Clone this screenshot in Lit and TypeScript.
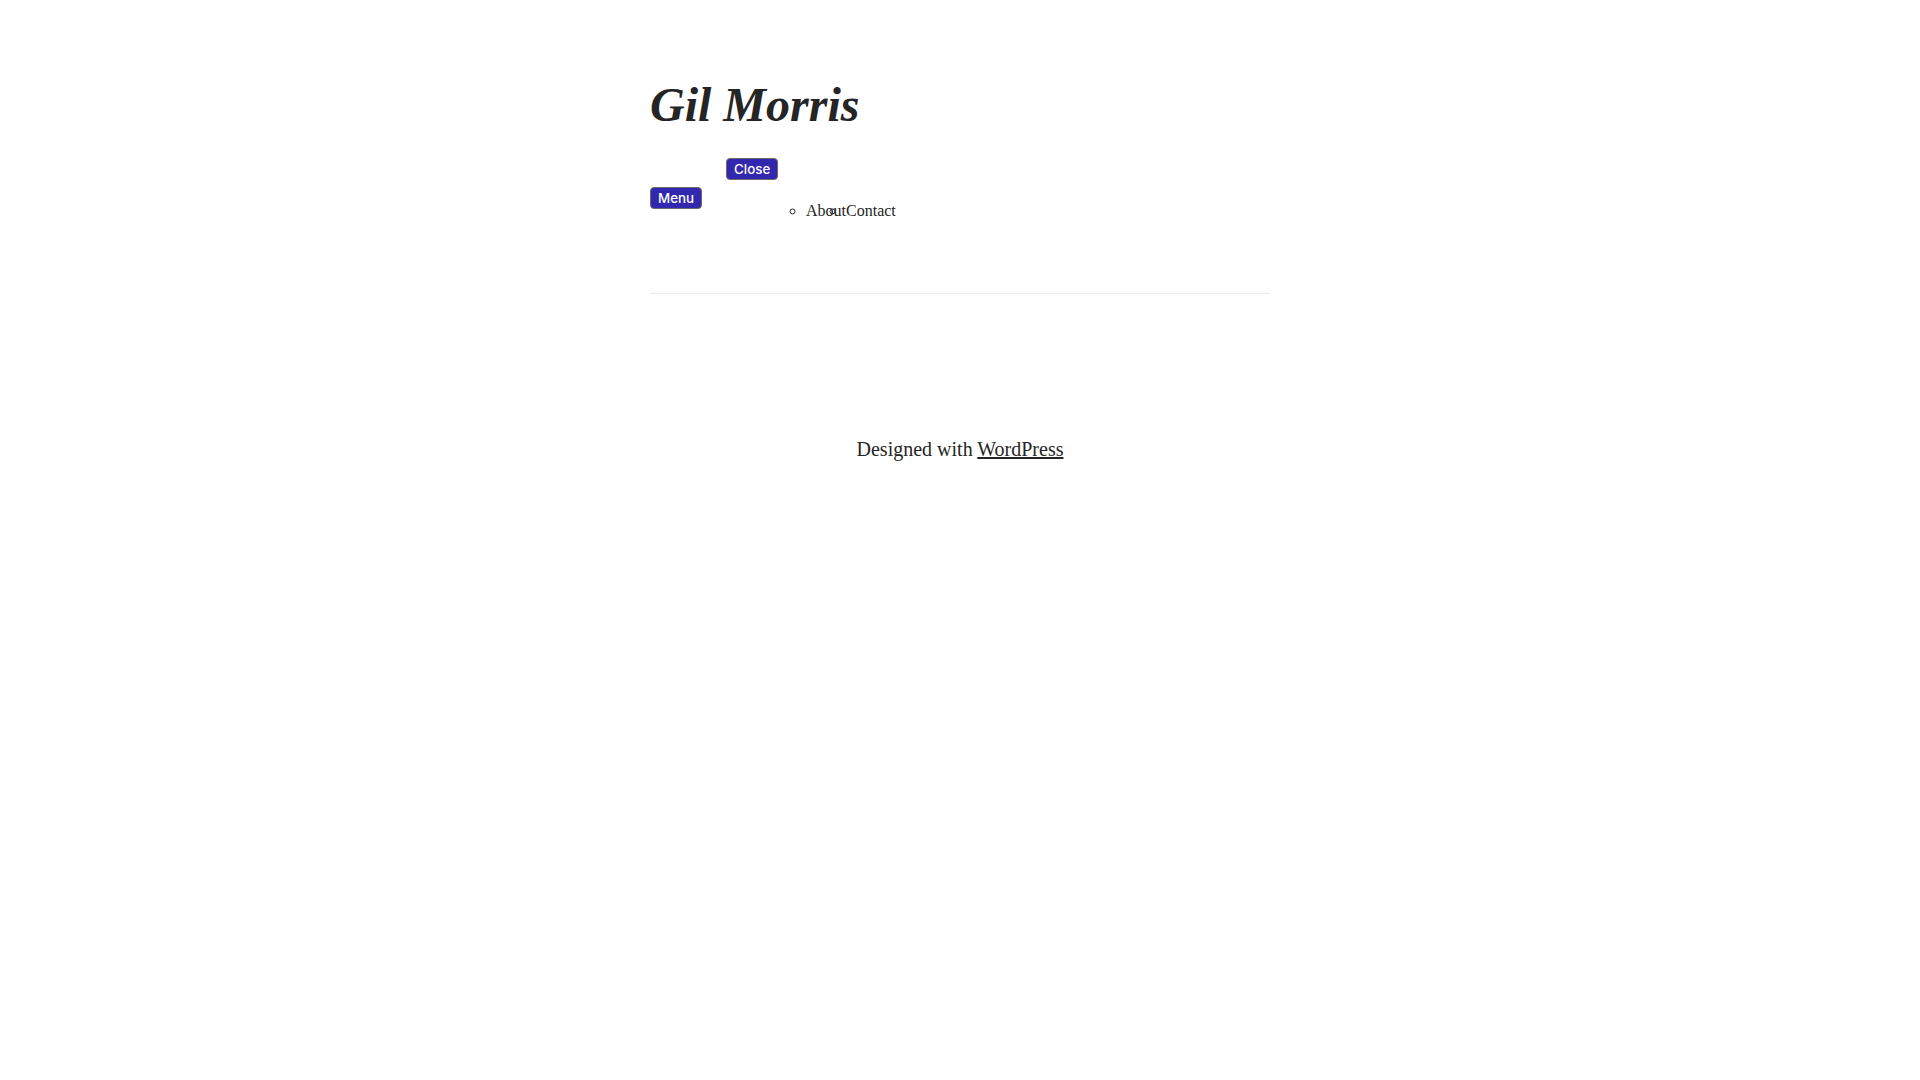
import { LitElement, html, css } from "lit";
import { customElement } from "lit/decorators.js";

@customElement("app-root")
export class AppRoot extends LitElement {
  static styles = css`
    :host {
      display: block;
      color: #252525;
      background: #fff;
      font-family: "Liberation Serif", serif;
      font-size: 20px;
    }
    .page {
      max-width: 620px;
      margin: 0 auto;
      padding: 0 30px;
    }
    .header {
      padding: 75px 0 55px;
      border-bottom: 1px solid #eee;
    }
    .title {
      margin: 0;
      font-size: 48px;
      line-height: 60px;
      font-style: italic;
      font-weight: 700;
    }
    .title a,
    .item a {
      color: inherit;
      text-decoration: none;
    }
    .nav {
      display: flex;
      align-items: center;
      gap: 24px;
      margin-top: 23px;
      font-size: 16px;
      line-height: 22px;
    }
    .button {
      box-sizing: border-box;
      height: 22px;
      padding: 0 7px;
      border: 1px solid #6b6b6b;
      border-radius: 4px;
      background: #3228b0;
      color: #fff;
      font-family: Inter, sans-serif;
      font-weight: 500;
      line-height: 20px;
    }
    .panel {
      display: flex;
      flex-direction: column;
      align-items: flex-start;
    }
    .list {
      display: flex;
      margin: 20px 0 16px;
      padding: 0 0 0 80px;
      list-style: circle;
    }
    .footer {
      padding: 142px 0 60px;
      text-align: center;
      line-height: 26px;
    }
    .footer p {
      margin: 0;
    }
    .footer a {
      color: inherit;
      text-decoration-thickness: 2px;
    }
  `;

  render() {
    return html`
      <div class="page">
        <header class="header">
          <h1 class="title"><a href="#">Gil Morris</a></h1>
          <nav class="nav" aria-label="Primary">
            <button class="button" type="button">Menu</button>
            <div class="panel">
              <button class="button" type="button">Close</button>
              <ul class="list">
                <li class="item"><a href="#about">About</a></li>
                <li class="item"><a href="#contact">Contact</a></li>
              </ul>
            </div>
          </nav>
        </header>
        <footer class="footer">
          <p>Designed with <a href="https://wordpress.org">WordPress</a></p>
        </footer>
      </div>
    `;
  }
}
